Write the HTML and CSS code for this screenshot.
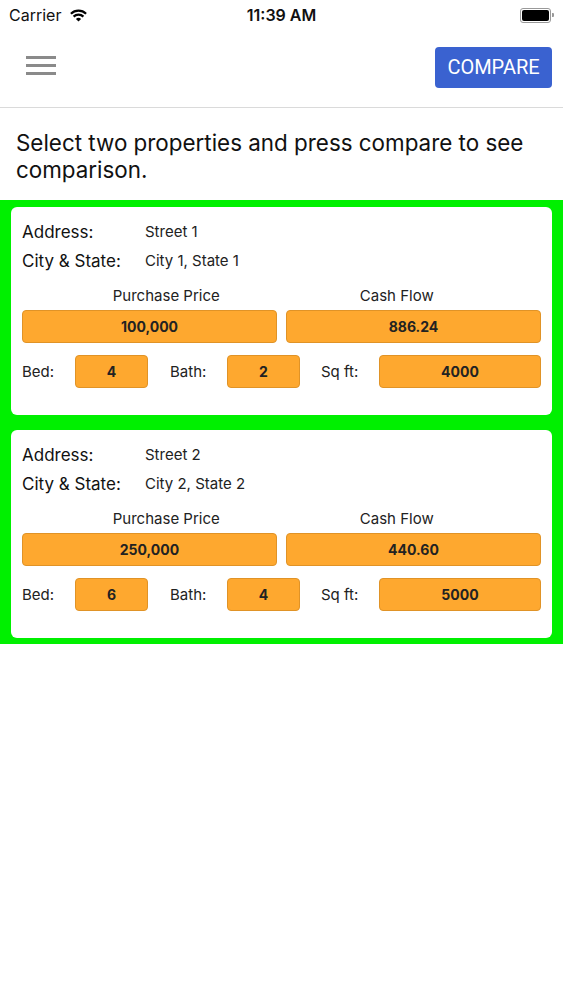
FILE: index.html
```html
<!DOCTYPE html>
<html lang="en">
<head>
    <meta charset="UTF-8">
    <meta name="viewport" content="width=device-width, initial-scale=1.0">
    <title>Compare Properties</title>
    <link rel="stylesheet" href="styles.css">
</head>
<body>
    <div class="status-bar">
        <div class="carrier">
            Carrier
            <svg class="wifi" width="19" height="14" viewBox="0 0 19 14">
                <path d="M9.5 13.6 L6.9 10.9 A3.8 3.8 0 0 1 12.1 10.9 Z" fill="#000"/>
                <path d="M4.6 8.6 A7 7 0 0 1 14.4 8.6" fill="none" stroke="#000" stroke-width="2.2"/>
                <path d="M1.9 5.8 A10.8 10.8 0 0 1 17.1 5.8" fill="none" stroke="#000" stroke-width="2.2"/>
            </svg>
        </div>
        <div class="clock">11:39 AM</div>
        <div class="battery">
            <div class="battery-body"><div class="battery-level"></div></div>
            <div class="battery-tip"></div>
        </div>
    </div>

    <header class="topbar">
        <button class="menu-btn" aria-label="Menu">
            <span></span><span></span><span></span>
        </button>
        <button class="compare-btn">COMPARE</button>
    </header>

    <p class="hint">Select two properties and press compare to see comparison.</p>

    <div class="property-list">
        <div class="card">
            <div class="info-row">
                <span class="info-label">Address:</span>
                <span class="info-value">Street 1</span>
            </div>
            <div class="info-row">
                <span class="info-label">City &amp; State:</span>
                <span class="info-value">City 1, State 1</span>
            </div>
            <div class="money-labels">
                <span>Purchase Price</span>
                <span>Cash Flow</span>
            </div>
            <div class="money">
                <div class="box">100,000</div>
                <div class="box">886.24</div>
            </div>
            <div class="specs">
                <span class="spec-label">Bed:</span>
                <div class="box box-small">4</div>
                <span class="spec-label spec-bath">Bath:</span>
                <div class="box box-small">2</div>
                <span class="spec-label spec-sqft">Sq ft:</span>
                <div class="box box-wide">4000</div>
            </div>
        </div>

        <div class="card">
            <div class="info-row">
                <span class="info-label">Address:</span>
                <span class="info-value">Street 2</span>
            </div>
            <div class="info-row">
                <span class="info-label">City &amp; State:</span>
                <span class="info-value">City 2, State 2</span>
            </div>
            <div class="money-labels">
                <span>Purchase Price</span>
                <span>Cash Flow</span>
            </div>
            <div class="money">
                <div class="box">250,000</div>
                <div class="box">440.60</div>
            </div>
            <div class="specs">
                <span class="spec-label">Bed:</span>
                <div class="box box-small">6</div>
                <span class="spec-label spec-bath">Bath:</span>
                <div class="box box-small">4</div>
                <span class="spec-label spec-sqft">Sq ft:</span>
                <div class="box box-wide">5000</div>
            </div>
        </div>
    </div>
</body>
</html>
```

FILE: styles.css
```css
body {
    margin: 0;
    font-family: Inter, "Noto Sans", sans-serif;
    color: #111;
    background: #fff;
}

/* status bar */
.status-bar {
    height: 30px;
    display: flex;
    align-items: center;
    justify-content: space-between;
    padding: 0 9px 0 9px;
    font-size: 16px;
}
.carrier {
    display: flex;
    align-items: center;
    gap: 8px;
    width: 100px;
}
.clock {
    font-weight: 600;
}
.battery {
    width: 100px;
    display: flex;
    justify-content: flex-end;
    align-items: center;
}
.battery-body {
    width: 27px;
    height: 11px;
    border: 1px solid #999;
    border-radius: 3px;
    padding: 1px;
}
.battery-level {
    width: 100%;
    height: 100%;
    background: #000;
    border-radius: 2px;
}
.battery-tip {
    width: 2px;
    height: 4px;
    background: #999;
    border-radius: 0 1px 1px 0;
    margin-left: 1px;
}

/* header */
.topbar {
    height: 77px;
    border-bottom: 1px solid #dadada;
    display: flex;
    align-items: center;
    justify-content: space-between;
    padding: 0 11px 0 26px;
}
.menu-btn {
    background: none;
    border: none;
    padding: 0;
    width: 30px;
    display: flex;
    flex-direction: column;
    gap: 5px;
    margin-top: -7px;
}
.menu-btn span {
    display: block;
    height: 3px;
    background: #8a8a8a;
}
.compare-btn {
    background: #3a62d0;
    color: #fff;
    border: none;
    border-radius: 4px;
    width: 117px;
    height: 41px;
    font-family: Roboto, sans-serif;
    font-size: 20px;
    margin-top: -3px;
}

.hint {
    margin: 0;
    padding: 21px 16px 17px;
    font-size: 22.4px;
    line-height: 27px;
    color: #111;
}

/* property cards */
.property-list {
    background: #00f000;
    padding: 7px 11px 6px;
    display: flex;
    flex-direction: column;
    gap: 15px;
}
.card {
    background: #fff;
    border-radius: 6px;
    padding: 10px 11px 27px;
}
.info-row {
    height: 29px;
    display: flex;
    align-items: center;
}
.info-label {
    width: 123px;
    font-size: 17px;
}
.info-value {
    font-size: 15px;
    color: #222;
}
.money-labels {
    display: grid;
    grid-template-columns: 1fr 1fr;
    padding: 0 29px;
    margin-top: 11px;
    font-size: 15px;
    line-height: 20px;
    color: #222;
    text-align: center;
}
.money {
    display: grid;
    grid-template-columns: 1fr 1fr;
    gap: 9px;
    margin-top: 4px;
}
.box {
    height: 33px;
    box-sizing: border-box;
    background: #fea82f;
    border: 1px solid #e09327;
    border-radius: 4px;
    display: flex;
    align-items: center;
    justify-content: center;
    font-size: 14px;
    font-weight: 700;
    color: #222;
}
.specs {
    display: flex;
    align-items: center;
    margin-top: 12px;
}
.spec-label {
    width: 53px;
    font-size: 15px;
    color: #222;
}
.spec-bath {
    width: 57px;
    margin-left: 22px;
}
.spec-sqft {
    width: 58px;
    margin-left: 21px;
}
.box-small {
    width: 73px;
}
.box-wide {
    flex: 1;
}
```
